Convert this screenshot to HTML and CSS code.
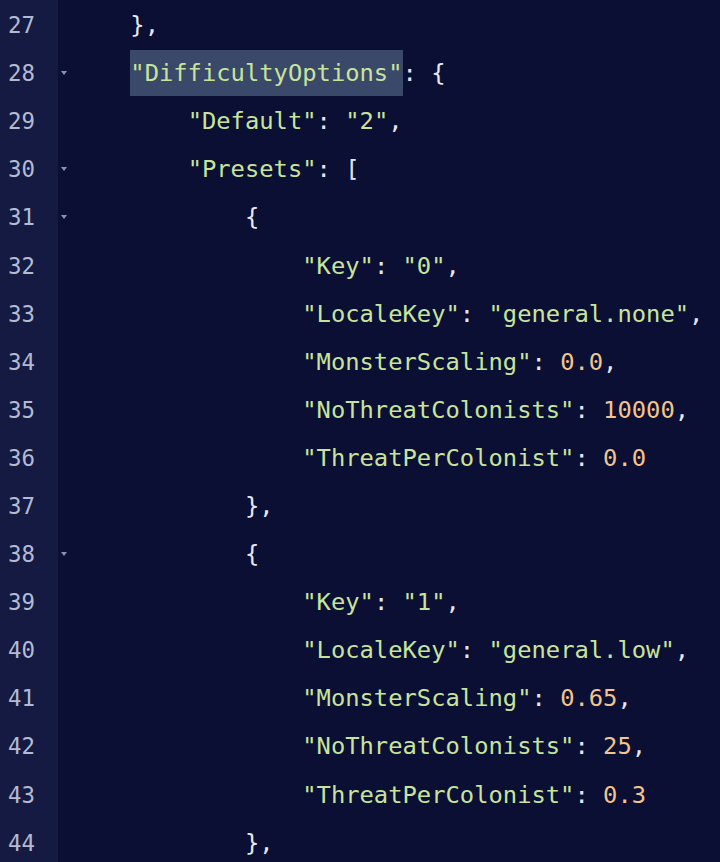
FILE: index.html
```html
<!DOCTYPE html>
<html>
<head>
<meta charset="utf-8">
<link rel="stylesheet" href="styles.css">
</head>
<body>
<div class="editor">
  <div class="line"><span class="ln">27</span><span class="fold"></span><span class="code">    <span class="p">},</span></span></div>
  <div class="line"><span class="ln">28</span><span class="fold open"></span><span class="code">    <span class="sel"><span class="s">"DifficultyOptions"</span></span><span class="p">: {</span></span></div>
  <div class="line"><span class="ln">29</span><span class="fold"></span><span class="code">        <span class="s">"Default"</span><span class="p">: </span><span class="s">"2"</span><span class="p">,</span></span></div>
  <div class="line"><span class="ln">30</span><span class="fold open"></span><span class="code">        <span class="s">"Presets"</span><span class="p">: [</span></span></div>
  <div class="line"><span class="ln">31</span><span class="fold open"></span><span class="code">            <span class="p">{</span></span></div>
  <div class="line"><span class="ln">32</span><span class="fold"></span><span class="code">                <span class="s">"Key"</span><span class="p">: </span><span class="s">"0"</span><span class="p">,</span></span></div>
  <div class="line"><span class="ln">33</span><span class="fold"></span><span class="code">                <span class="s">"LocaleKey"</span><span class="p">: </span><span class="s">"general.none"</span><span class="p">,</span></span></div>
  <div class="line"><span class="ln">34</span><span class="fold"></span><span class="code">                <span class="s">"MonsterScaling"</span><span class="p">: </span><span class="n">0.0</span><span class="p">,</span></span></div>
  <div class="line"><span class="ln">35</span><span class="fold"></span><span class="code">                <span class="s">"NoThreatColonists"</span><span class="p">: </span><span class="n">10000</span><span class="p">,</span></span></div>
  <div class="line"><span class="ln">36</span><span class="fold"></span><span class="code">                <span class="s">"ThreatPerColonist"</span><span class="p">: </span><span class="n">0.0</span></span></div>
  <div class="line"><span class="ln">37</span><span class="fold"></span><span class="code">            <span class="p">},</span></span></div>
  <div class="line"><span class="ln">38</span><span class="fold open"></span><span class="code">            <span class="p">{</span></span></div>
  <div class="line"><span class="ln">39</span><span class="fold"></span><span class="code">                <span class="s">"Key"</span><span class="p">: </span><span class="s">"1"</span><span class="p">,</span></span></div>
  <div class="line"><span class="ln">40</span><span class="fold"></span><span class="code">                <span class="s">"LocaleKey"</span><span class="p">: </span><span class="s">"general.low"</span><span class="p">,</span></span></div>
  <div class="line"><span class="ln">41</span><span class="fold"></span><span class="code">                <span class="s">"MonsterScaling"</span><span class="p">: </span><span class="n">0.65</span><span class="p">,</span></span></div>
  <div class="line"><span class="ln">42</span><span class="fold"></span><span class="code">                <span class="s">"NoThreatColonists"</span><span class="p">: </span><span class="n">25</span><span class="p">,</span></span></div>
  <div class="line"><span class="ln">43</span><span class="fold"></span><span class="code">                <span class="s">"ThreatPerColonist"</span><span class="p">: </span><span class="n">0.3</span></span></div>
  <div class="line"><span class="ln">44</span><span class="fold"></span><span class="code">            <span class="p">},</span></span></div>
</div>
</body>
</html>
```
FILE: styles.css
```css
html, body {
  margin: 0;
  padding: 0;
  background: #0a0f33;
  height: 100%;
  overflow: hidden;
}
.editor {
  display: flex;
  flex-direction: column;
  padding-top: 1px;
  min-height: 100%;
  background: linear-gradient(to right, #141a42 0, #141a42 58px, #0a0f33 58px);
  font-family: "DejaVu Sans Mono", "Liberation Mono", monospace;
}
.line {
  display: flex;
  align-items: center;
  height: 48.1px;
  flex: none;
}
.ln {
  width: 50px;
  padding-left: 8px;
  font-size: 22.4px;
  color: #b3bad2;
  box-sizing: content-box;
}
.fold {
  width: 15px;
  height: 100%;
  display: flex;
  align-items: center;
  justify-content: flex-start;
}
.fold.open::before {
  content: "";
  display: block;
  margin-left: 3px;
  width: 0;
  height: 0;
  border-left: 3px solid transparent;
  border-right: 3px solid transparent;
  border-top: 4px solid #8a92b0;
}
.code {
  white-space: pre;
  font-size: 23.8px;
  color: #e6e8f0;
  line-height: 46px;
}
.p { color: #e6e8f0; }
.s { color: #c8e49c; }
.n { color: #f3c48e; }
.sel {
  display: inline-block;
  background: #3a4869;
  height: 46px;
  line-height: 46px;
  vertical-align: top;
}
```
